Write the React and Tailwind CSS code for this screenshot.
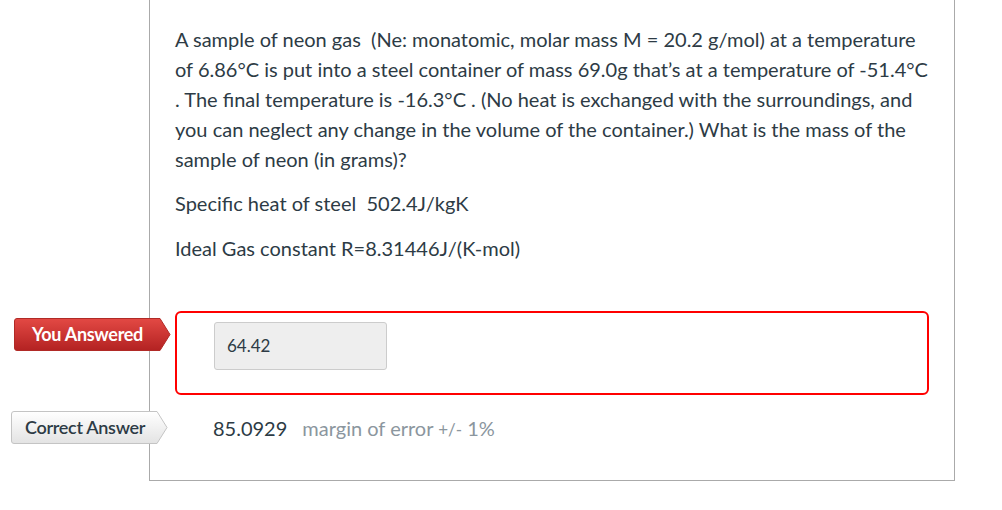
import React from 'react';

const Tag = ({ label, variant }) => {
  const red = variant === 'red';
  return (
    <div className={`relative w-[157px] h-[33px] flex items-center ${red ? 'pl-[18px]' : 'pl-[14px]'}`}>
      <svg className="absolute inset-0" width="157" height="33" viewBox="0 0 157 33">
        <defs>
          <linearGradient id={`g-${variant}`} x1="0" y1="0" x2="0" y2="1">
            {red ? (
              <>
                <stop offset="0" stopColor="#e34944" />
                <stop offset="1" stopColor="#b32222" />
              </>
            ) : (
              <>
                <stop offset="0" stopColor="#ffffff" />
                <stop offset="1" stopColor="#e3e3e3" />
              </>
            )}
          </linearGradient>
        </defs>
        <path
          d="M3 0.5 H146 L156 16.5 L146 32.5 H3 Q0.5 32.5 0.5 30 V3 Q0.5 0.5 3 0.5 Z"
          fill={`url(#g-${variant})`}
          stroke={red ? '#b12a26' : '#c4c4c4'}
          strokeWidth="1"
        />
      </svg>
      <span
        className={`relative text-[18px] tracking-[-0.3px] ${red ? 'text-white font-bold' : 'text-[#2d3b45] font-semibold'}`}
      >
        {label}
      </span>
    </div>
  );
};

export default function App() {
  return (
    <div className="w-[1002px] h-[510px] bg-white font-['Lato','Noto_Sans',sans-serif] text-[#2d3b45] overflow-hidden">
      <div className="ml-[149px] w-[806px] border-x border-b border-[#aaaaaa] pt-[24px] pb-[32px] px-[25px] relative">
        <div className="text-[20px] leading-[30px]">
          <p>
            A sample of neon gas&nbsp; (Ne: monatomic, molar mass M = 20.2 g/mol) at a temperature
            <br />
            of 6.86°C is put into a steel container of mass 69.0g that’s at a temperature of -51.4°C
            <br />
            . The final temperature is -16.3°C . (No heat is exchanged with the surroundings, and
            <br />
            you can neglect any change in the volume of the container.) What is the mass of the
            <br />
            sample of neon (in grams)?
          </p>
          <p className="mt-[14px]">Specific heat of steel&nbsp; 502.4J/kgK</p>
          <p className="mt-[15px]">Ideal Gas constant R=8.31446J/(K-mol)</p>
        </div>

        <div className="relative mt-[48px]">
          <div className="absolute left-[-161px] top-[7px]">
            <Tag label="You Answered" variant="red" />
          </div>
          <div className="border-2 border-[#ff0000] rounded-[6px] h-[84px] pt-[9px] pl-[37px]">
            <div className="w-[173px] h-[48px] bg-[#eeeeee] border border-[#cccccc] rounded-[3px] flex items-center px-[12px] text-[17px]">
              64.42
            </div>
          </div>
        </div>

        <div className="relative mt-[13px] h-[40px] flex items-center pl-[38px]">
          <div className="absolute left-[-164px] top-[3px]">
            <Tag label="Correct Answer" variant="gray" />
          </div>
          <span className="text-[20px]">85.0929</span>
          <span className="ml-[15px] text-[20px] text-[#8b969e]">
            margin of error <span className="text-[17px]">+/-</span> 1%
          </span>
        </div>
      </div>
    </div>
  );
}
